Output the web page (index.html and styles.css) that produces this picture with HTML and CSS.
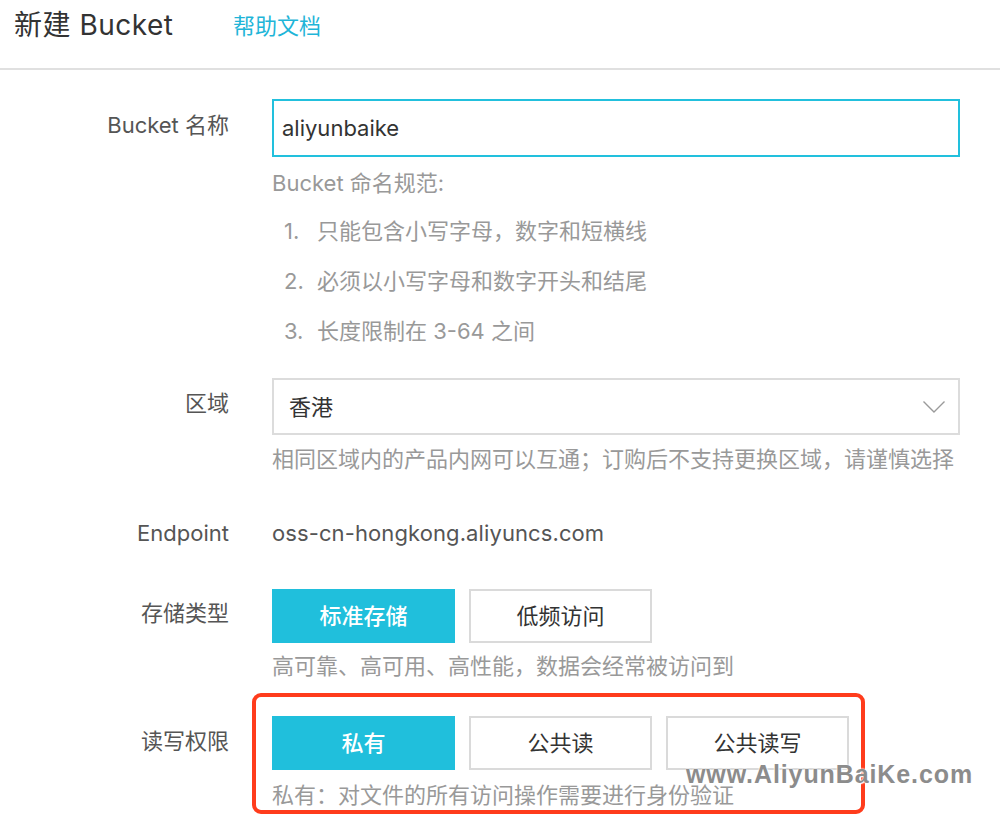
FILE: index.html
```html
<!DOCTYPE html>
<html lang="zh-CN">
<head>
<meta charset="utf-8">
<title>新建 Bucket</title>
<link rel="stylesheet" href="styles.css">
</head>
<body>
<header class="header">
  <h1 class="title">新建 Bucket</h1>
  <a class="help-link" href="#">帮助文档</a>
</header>
<main class="form">
  <div class="row row-name">
    <div class="label">Bucket 名称</div>
    <div class="field">
      <div class="input">aliyunbaike</div>
      <div class="hint hint-first">Bucket 命名规范:</div>
      <ol class="rules">
        <li><span class="num">1.</span>只能包含小写字母，数字和短横线</li>
        <li><span class="num">2.</span>必须以小写字母和数字开头和结尾</li>
        <li><span class="num">3.</span>长度限制在 3-64 之间</li>
      </ol>
    </div>
  </div>
  <div class="row row-region">
    <div class="label">区域</div>
    <div class="field">
      <div class="select">
        <span>香港</span>
        <svg class="chevron" width="24" height="14" viewBox="0 0 24 14"><path d="M1.5 1.5 L12 12 L22.5 1.5" fill="none" stroke="#9a9a9a" stroke-width="1.4"/></svg>
      </div>
      <div class="hint">相同区域内的产品内网可以互通；订购后不支持更换区域，请谨慎选择</div>
    </div>
  </div>
  <div class="row row-endpoint">
    <div class="label label-inline">Endpoint</div>
    <div class="field value">oss-cn-hongkong.aliyuncs.com</div>
  </div>
  <div class="row row-storage">
    <div class="label">存储类型</div>
    <div class="field">
      <div class="btn-group">
        <button class="btn btn-active">标准存储</button>
        <button class="btn">低频访问</button>
      </div>
      <div class="hint">高可靠、高可用、高性能，数据会经常被访问到</div>
    </div>
  </div>
  <div class="row row-acl">
    <div class="label">读写权限</div>
    <div class="field field-acl">
      <div class="btn-group">
        <button class="btn btn-active">私有</button>
        <button class="btn">公共读</button>
        <button class="btn">公共读写</button>
      </div>
      <div class="hint">私有：对文件的所有访问操作需要进行身份验证</div>
      <div class="highlight"></div>
      <div class="watermark">www.AliyunBaiKe.com</div>
    </div>
  </div>
</main>
</body>
</html>
```

FILE: styles.css
```css
* { box-sizing: border-box; }
html, body { margin: 0; padding: 0; background: #fff; }
body {
  font-family: Inter, "Noto Sans CJK SC", sans-serif;
  font-size: 22px;
  color: #555;
  width: 1000px;
  height: 835px;
  overflow: hidden;
}
.header {
  height: 70px;
  border-bottom: 2px solid #e0e0e0;
  display: flex;
  align-items: flex-start;
  padding: 6px 0 0 14px;
}
.title {
  margin: 0;
  font-size: 28px;
  font-weight: normal;
  line-height: 38px;
  color: #333;
  width: 219px;
  letter-spacing: 0.5px;
}
.help-link {
  font-size: 22px;
  line-height: 38px;
  color: #1fb5d8;
  text-decoration: none;
  padding-top: 1px;
}
.form { padding-top: 29px; }
.row {
  display: grid;
  grid-template-columns: 229px 688px;
  column-gap: 43px;
}
.label {
  text-align: right;
  line-height: 30px;
  padding-top: 11px;
  color: #555;
  white-space: nowrap;
}
.label-inline { padding-top: 0; }
.field { line-height: 30px; }
.input {
  height: 58px;
  border: 2px solid #22c0dd;
  padding: 0 8px;
  display: flex;
  align-items: center;
  color: #333;
  font-size: 22px;
}
.hint { color: #999; margin-top: 9px; white-space: nowrap; }
.hint-first { margin-top: 11px; }
.rules {
  list-style: none;
  margin: 8px 0 0;
  padding: 0 0 0 12px;
  color: #999;
}
.rules li { line-height: 50px; }
.num { display: inline-block; width: 33px; }
.row-region { margin-top: 22px; }
.row-region .label { padding-top: 10px; }
.select {
  height: 57px;
  border: 2px solid #dcdcdc;
  display: flex;
  align-items: center;
  justify-content: space-between;
  padding: 0 12px 0 15px;
  color: #333;
}
.row-endpoint { margin-top: 44px; }
.value { color: #555; letter-spacing: 0.1px; }
.row-storage { margin-top: 41px; }
.row-storage .label { padding-top: 9px; }
.btn-group { display: flex; gap: 14px; }
.btn {
  width: 183px;
  height: 54px;
  border: 2px solid #dadada;
  background: #fff;
  color: #333;
  font: inherit;
  font-size: 22px;
  padding: 0;
  margin: 0;
}
.btn-active {
  background: #20bfdc;
  border-color: #20bfdc;
  color: #fff;
  font-weight: 500;
}
.row-storage .hint { margin-top: 8px; }
.row-acl { margin-top: 35px; }
.row-acl .label { padding-top: 10px; }
.field-acl { position: relative; }
.row-acl .hint { margin-top: 10px; }
.highlight {
  position: absolute;
  left: -20px;
  top: -23px;
  width: 613px;
  height: 121px;
  border: 4px solid #ff3c1c;
  border-radius: 9px;
  pointer-events: none;
}
.watermark {
  position: absolute;
  left: 414px;
  top: 43px;
  font-family: "Liberation Sans", sans-serif;
  font-weight: bold;
  font-size: 25px;
  line-height: 30px;
  color: #8c8c8c;
  letter-spacing: 0.9px;
  text-shadow: 0 0 2px #fff, 0 0 2px #fff, 1px 1px 1px #fff;
  white-space: nowrap;
}
```
